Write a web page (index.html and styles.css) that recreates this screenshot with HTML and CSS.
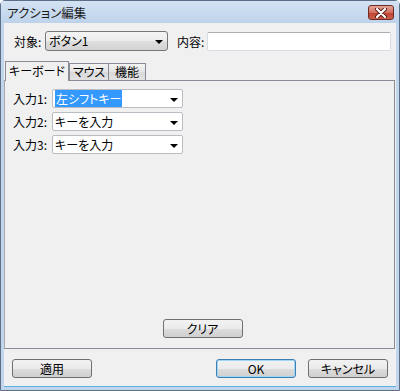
FILE: index.html
```html
<!DOCTYPE html>
<html>
<head>
    <title>アクション編集</title>
    <link rel="stylesheet" href="styles.css">
</head>
<body>
    <div class="window">
        <div class="titlebar">
            <span class="title">アクション編集</span>
            <div class="close-button">
                <svg width="14" height="10" viewBox="0 0 14 10">
                    <path d="M3 1 L11 9 M11 1 L3 9" stroke="#5a1a14" stroke-width="4" stroke-linecap="round"/>
                    <path d="M3 1 L11 9 M11 1 L3 9" stroke="#ffffff" stroke-width="2.2" stroke-linecap="round"/>
                </svg>
            </div>
        </div>
        <div class="client">
            <div class="target-row">
                <span class="label target-label">対象:</span>
                <div class="combo combo-button">
                    <span class="combo-text">ボタン1</span>
                    <span class="arrow"></span>
                </div>
                <span class="label content-label">内容:</span>
                <div class="textbox"></div>
            </div>

            <div class="tab-strip">
                <div class="tab active">キーボード</div>
                <div class="tab tab-mouse">マウス</div>
                <div class="tab tab-function">機能</div>
            </div>
            <div class="tab-panel">
                <div class="input-row">
                    <span class="label">入力1:</span>
                    <div class="combo combo-edit">
                        <span class="combo-text"><span class="selected">左シフトキー</span></span>
                        <span class="arrow"></span>
                    </div>
                </div>
                <div class="input-row">
                    <span class="label">入力2:</span>
                    <div class="combo combo-edit">
                        <span class="combo-text">キーを入力</span>
                        <span class="arrow"></span>
                    </div>
                </div>
                <div class="input-row">
                    <span class="label">入力3:</span>
                    <div class="combo combo-edit">
                        <span class="combo-text">キーを入力</span>
                        <span class="arrow"></span>
                    </div>
                </div>
                <div class="panel-footer">
                    <button class="btn clear-button">クリア</button>
                </div>
            </div>

            <div class="dialog-buttons">
                <button class="btn">適用</button>
                <div class="spacer"></div>
                <button class="btn default-button">OK</button>
                <button class="btn">キャンセル</button>
            </div>
        </div>
    </div>
</body>
</html>
```

FILE: styles.css
```css
body {
    margin: 0;
    font-family: "Noto Sans CJK JP", "DejaVu Sans", sans-serif;
    font-size: 12px;
    font-feature-settings: "palt";
    color: #000;
}
.window {
    width: 400px;
    height: 391px;
    box-sizing: border-box;
    border: 1px solid #5b6f86;
    border-radius: 5px 5px 0 0;
    background-color: #c1d5ec;
    padding: 0 3px 3px 3px;
    display: flex;
    flex-direction: column;
}
.titlebar {
    height: 22px;
    display: flex;
    align-items: center;
    justify-content: space-between;
    background: linear-gradient(#d4e3f3, #bdd2ea);
    margin: 0 -3px;
    padding: 0 5px 0 6px;
}
.title {
    font-size: 12.5px;
    color: #1b1b1b;
}
.close-button {
    width: 26px;
    height: 15px;
    box-sizing: border-box;
    border: 1px solid #6e2b25;
    border-radius: 3px;
    background: linear-gradient(#e5a597, #d46f60 50%, #c0412f 51%, #c9604c);
    display: flex;
    align-items: center;
    justify-content: center;
    margin-top: 1px;
}
.client {
    flex: 1;
    background-color: #f0f0f0;
    border-bottom: 1px solid #58b3e2;
    padding: 8px 0 8px 0;
    display: flex;
    flex-direction: column;
}
.target-row {
    display: flex;
    align-items: center;
    height: 20px;
    padding-left: 10px;
}
.label {
    flex: none;
}
.target-label {
    width: 31px;
}
.content-label {
    width: 30px;
    margin-left: 9px;
}
.combo {
    position: relative;
    box-sizing: border-box;
    display: flex;
    align-items: center;
}
.combo-button {
    width: 123px;
    height: 20px;
    border: 1px solid #767676;
    border-radius: 3px;
    background: linear-gradient(#f4f4f4, #ececec 50%, #dedede 51%, #d2d2d2);
    padding-left: 3px;
}
.combo-edit {
    width: 131px;
    height: 19px;
    border: 1px solid #b9bcc2;
    border-radius: 2px;
    background-color: #fff;
    padding-left: 2px;
}
.combo-text {
    flex: 1;
    line-height: 14px;
}
.selected {
    background-color: #3399ff;
    color: #fff;
    padding: 0 1px;
}
.arrow {
    width: 0;
    height: 0;
    border-left: 4px solid transparent;
    border-right: 4px solid transparent;
    border-top: 4px solid #000;
    margin-right: 4px;
    margin-top: 2px;
}
.textbox {
    width: 184px;
    height: 19px;
    box-sizing: border-box;
    border: 1px solid #d6dce3;
    border-top-color: #abadb3;
    border-radius: 2px;
    background-color: #fff;
}
.tab-strip {
    display: flex;
    align-items: flex-end;
    margin-top: 10px;
    padding-left: 1px;
    height: 19px;
    position: relative;
    z-index: 1;
}
.tab {
    box-sizing: border-box;
    height: 17px;
    border: 1px solid #898c95;
    border-bottom: none;
    background: linear-gradient(#f4f4f4, #e4e4e4 50%, #d9d9d9 51%, #e2e2e2);
    text-align: center;
    line-height: 15px;
}
.tab.active {
    width: 64px;
    height: 20px;
    margin-bottom: -1px;
    background: #f0f0f0;
    line-height: 18px;
}
.tab-mouse {
    width: 40px;
}
.tab-function {
    width: 38px;
    margin-left: -1px;
}
.tab-panel {
    flex: 1;
    border: 1px solid #898c95;
    border-left-color: #a6a8ae;
    margin-right: 1px;
    padding: 8px 0 10px 8px;
    display: flex;
    flex-direction: column;
    gap: 4px;
}
.input-row {
    display: flex;
    align-items: center;
    height: 19px;
}
.input-row .label {
    width: 39px;
}
.panel-footer {
    margin-top: auto;
    display: flex;
    justify-content: center;
    padding-right: 2px;
}
.btn {
    width: 80px;
    height: 19px;
    box-sizing: border-box;
    border: 1px solid #707070;
    border-radius: 3px;
    background: linear-gradient(#f2f2f2, #ebebeb 50%, #dddddd 51%, #cfcfcf);
    font-family: "Noto Sans CJK JP", "DejaVu Sans", sans-serif;
    font-size: 12px;
    font-feature-settings: "palt";
    padding: 0;
    line-height: 15px;
}
.default-button {
    border-color: #3c7fb1;
    box-shadow: inset 0 0 0 1px #9fd8f7;
}
.dialog-buttons {
    display: flex;
    margin-top: 10px;
    padding: 0 8px;
    gap: 12px;
}
.spacer {
    flex: 1;
}
```
